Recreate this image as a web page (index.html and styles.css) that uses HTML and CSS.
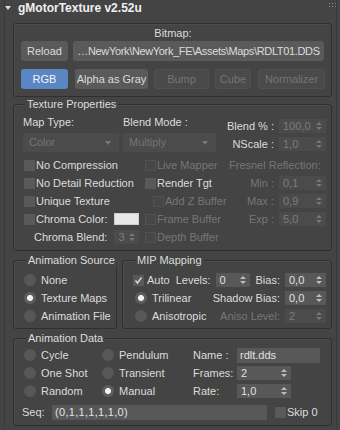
FILE: index.html
```html
<!DOCTYPE html>
<html lang="en">
<head>
    <meta charset="UTF-8">
    <title>gMotorTexture</title>
    <link rel="stylesheet" href="styles.css">
</head>
<body>
    <div class="rollout">
        <div class="title-bar">
            <span class="arrow"></span>
            <span class="title">gMotorTexture v2.52u</span>
            <svg class="grip" width="7" height="6" viewBox="0 0 7 6">
                <rect x="0" y="0" width="1" height="1"/><rect x="3" y="0" width="1" height="1"/><rect x="6" y="0" width="1" height="1"/>
                <rect x="0" y="3" width="1" height="1"/><rect x="3" y="3" width="1" height="1"/><rect x="6" y="3" width="1" height="1"/>
            </svg>
        </div>

        <!-- Bitmap -->
        <div class="group g-bitmap">
            <div class="center-label">Bitmap:</div>
            <div class="btn-row">
                <div class="btn w-reload">Reload</div>
                <div class="btn w-path">…NewYork\NewYork_FE\Assets\Maps\RDLT01.DDS</div>
            </div>
            <div class="btn-row row-2">
                <div class="btn active w-rgb">RGB</div>
                <div class="btn w-alpha">Alpha as Gray</div>
                <div class="btn off w-bump">Bump</div>
                <div class="btn off w-cube">Cube</div>
                <div class="btn off w-norm">Normalizer</div>
            </div>
        </div>

        <!-- Texture Properties -->
        <div class="group g-tex">
            <div class="legend">Texture Properties</div>
            <div class="tp-top">
                <div class="tp-maps">
                    <div class="tp-labels">
                        <span class="lbl-map">Map Type:</span>
                        <span>Blend Mode :</span>
                    </div>
                    <div class="tp-drops">
                        <div class="dd dd-color">Color</div>
                        <div class="dd dd-blend">Multiply</div>
                    </div>
                </div>
                <div class="tp-blend">
                    <div class="field-row"><span>Blend % :</span><span class="spin off w47">100,0</span></div>
                    <div class="field-row"><span>NScale :</span><span class="spin off w47">1,0</span></div>
                </div>
            </div>
            <div class="tp-grid">
                <div class="chk"><span class="box"></span>No Compression</div>
                <div class="chk off"><span class="box"></span>Live Mapper</div>
                <div class="fresnel off-text">Fresnel Reflection:</div>

                <div class="chk"><span class="box"></span>No Detail Reduction</div>
                <div class="chk"><span class="box"></span>Render Tgt</div>
                <div class="field-row"><span class="off-text">Min :</span><span class="spin off w47">0,1</span></div>

                <div class="chk"><span class="box"></span>Unique Texture</div>
                <div class="chk off indent"><span class="box"></span>Add Z Buffer</div>
                <div class="field-row"><span class="off-text">Max :</span><span class="spin off w47">0,9</span></div>

                <div class="chk"><span class="box"></span>Chroma Color:<span class="swatch"></span></div>
                <div class="chk off"><span class="box"></span>Frame Buffer</div>
                <div class="field-row"><span class="off-text">Exp :</span><span class="spin off w47">5,0</span></div>

                <div class="chroma-blend">Chroma Blend:<span class="spin off w25">3</span></div>
                <div class="chk off"><span class="box"></span>Depth Buffer</div>
                <div></div>
            </div>
        </div>

        <div class="pair">
            <!-- Animation Source -->
            <div class="group g-src">
                <div class="legend">Animation Source</div>
                <div class="opt"><span class="radio"></span>None</div>
                <div class="opt"><span class="radio on"></span>Texture Maps</div>
                <div class="opt"><span class="radio"></span>Animation File</div>
            </div>

            <!-- MIP Mapping -->
            <div class="group g-mip">
                <div class="legend">MIP Mapping</div>
                <div class="opt">
                    <span class="box checked">
                        <svg width="9" height="9" viewBox="0 0 9 9"><polyline points="1.5,4.5 3.5,7 7.5,1.5" fill="none" stroke="#d8d8d8" stroke-width="1.4"/></svg>
                    </span>Auto
                    <span class="mip-right">
                        <span>Levels:</span><span class="spin w34">0</span>
                        <span class="gap-l">Bias:</span><span class="spin w41">0,0</span>
                    </span>
                </div>
                <div class="opt"><span class="radio on"></span>Trilinear
                    <span class="mip-right"><span>Shadow Bias:</span><span class="spin w41">0,0</span></span>
                </div>
                <div class="opt"><span class="radio"></span>Anisotropic
                    <span class="mip-right"><span class="off-text">Aniso Level:</span><span class="spin off w41">2</span></span>
                </div>
            </div>
        </div>

        <!-- Animation Data -->
        <div class="group g-data">
            <div class="legend">Animation Data</div>
            <div class="ad-grid">
                <div class="opt"><span class="radio"></span>Cycle</div>
                <div class="opt"><span class="radio"></span>Pendulum</div>
                <div class="ad-field"><span class="ad-label">Name :</span><span class="text-field w83">rdlt.dds</span></div>

                <div class="opt"><span class="radio"></span>One Shot</div>
                <div class="opt"><span class="radio"></span>Transient</div>
                <div class="ad-field"><span class="ad-label">Frames:</span><span class="spin w54">2</span></div>

                <div class="opt"><span class="radio"></span>Random</div>
                <div class="opt"><span class="radio on"></span>Manual</div>
                <div class="ad-field"><span class="ad-label">Rate:</span><span class="spin w54">1,0</span></div>
            </div>
            <div class="seq-row">
                <span class="seq-label">Seq:</span>
                <span class="text-field seq-field">(0,1,1,1,1,1,0)</span>
                <span class="chk skip"><span class="box"></span>Skip 0</span>
            </div>
        </div>
    </div>
</body>
</html>
```

FILE: styles.css
```css
* {
    box-sizing: border-box;
}

body {
    margin: 0;
    background-color: #444444;
    font-family: "Liberation Sans", Arial, sans-serif;
    font-size: 11px;
    line-height: 14px;
    color: #dcdcdc;
}

.rollout {
    margin-left: 4px;
    width: 333px;
    height: 430px;
    border-left: 1px solid #3a3a3a;
    border-right: 1px solid #3a3a3a;
}

/* Title bar */
.title-bar {
    height: 16px;
    display: flex;
    align-items: center;
}

.arrow {
    width: 0;
    height: 0;
    border-left: 3px solid transparent;
    border-right: 3px solid transparent;
    border-top: 4px solid #e0e0e0;
}

.title {
    margin-left: 7px;
    font-weight: bold;
    font-size: 12px;
    color: #f0f0f0;
}

.grip {
    margin-left: auto;
    margin-top: -4px;
    fill: #8a8a8a;
}

/* Group boxes */
.group {
    margin-left: 8px;
    width: 319px;
    border: 1px solid #2f2f2f;
    border-radius: 3px;
    box-shadow: inset 1px 1px 0 #4c4c4c;
}

.legend {
    width: max-content;
    margin: -8px 0 0 2px;
    padding: 0 2px;
    background-color: #444444;
    line-height: 14px;
}

/* Bitmap group */
.g-bitmap {
    margin-top: 7px;
    padding: 0 6px 7px 7px;
}

.center-label {
    margin-top: 2px;
    text-align: center;
}

.btn-row {
    display: flex;
    margin-top: 1px;
}

.row-2 {
    margin-top: 8px;
}

.btn {
    height: 20px;
    line-height: 20px;
    text-align: center;
    background-color: #5a5a5a;
    border-radius: 3px;
    color: #dcdcdc;
    white-space: nowrap;
    overflow: hidden;
}

.btn.active {
    background-color: #5b86c4;
    color: #f4f4f4;
}

.btn.off {
    background-color: #4a4a4a;
    border: 1px solid #515151;
    line-height: 18px;
    color: #757575;
}

.w-reload { width: 47px; }
.w-path { width: 251px; margin-left: 5px; letter-spacing: -0.35px; }
.w-rgb { width: 47px; }
.w-alpha { width: 73px; margin-left: 7px; }
.w-bump { width: 55px; margin-left: 6px; }
.w-cube { width: 36px; margin-left: 6px; }
.w-norm { width: 67px; margin-left: 7px; }

/* Texture properties */
.g-tex {
    margin-top: 7px;
    padding: 0 4px 4px 9px;
}

.tp-top {
    display: flex;
    height: 42px;
}

.tp-maps {
    width: 204px;
}

.tp-labels {
    display: flex;
    margin-top: 4px;
}

.lbl-map {
    width: 100px;
}

.tp-drops {
    display: flex;
    margin-top: 4px;
}

.dd {
    position: relative;
    height: 19px;
    line-height: 19px;
    padding-left: 6px;
    background-color: #4b4b4b;
    color: #747474;
}

.dd::after {
    content: "";
    position: absolute;
    right: 8px;
    top: 8px;
    border-left: 3px solid transparent;
    border-right: 3px solid transparent;
    border-top: 4px solid #777777;
}

.dd-color { width: 96px; }
.dd-blend { width: 93px; margin-left: 4px; }

.tp-blend {
    width: 99px;
    padding-top: 6px;
}

.field-row {
    height: 18px;
    display: flex;
    align-items: center;
    justify-content: flex-end;
    white-space: nowrap;
}

.tp-grid {
    margin-top: 3px;
    display: grid;
    grid-template-columns: 122px 82px 99px;
    grid-auto-rows: 18px;
    align-items: center;
}

.fresnel {
    padding-left: 2px;
    white-space: nowrap;
}

.off-text {
    color: #767676;
}

/* Checkboxes */
.chk {
    display: flex;
    align-items: center;
    white-space: nowrap;
}

.box {
    width: 11px;
    height: 11px;
    margin-right: 1px;
    background-color: #595959;
    flex: none;
}

.tp-grid > .chk:nth-child(3n+1) .box {
    margin-left: 1px;
}

.chk.off {
    color: #767676;
}

.chk.off .box {
    background-color: #474747;
    border: 1px solid #525252;
}

.indent {
    padding-left: 8px;
}

.box.checked {
    display: flex;
    align-items: center;
    justify-content: center;
    margin-right: 3px;
}

.swatch {
    width: 25px;
    height: 12px;
    margin-left: 6px;
    background-color: #e8e8e8;
    border: 1px solid #cfcfcf;
    flex: none;
}

.chroma-blend {
    display: flex;
    align-items: center;
    padding-left: 11px;
    white-space: nowrap;
}

/* Spinners */
.spin {
    position: relative;
    height: 14px;
    line-height: 14px;
    margin-left: 5px;
    padding-left: 4px;
    background-color: #585858;
    color: #e2e2e2;
    flex: none;
}

.spin::before,
.spin::after {
    content: "";
    position: absolute;
    right: 4px;
    border-left: 3px solid transparent;
    border-right: 3px solid transparent;
}

.spin::before {
    top: 3px;
    border-bottom: 3px solid #bdbdbd;
}

.spin::after {
    bottom: 3px;
    border-top: 3px solid #bdbdbd;
}

.spin.off {
    background-color: #4b4b4b;
    color: #7c7c7c;
}

.spin.off::before { border-bottom-color: #777777; }
.spin.off::after { border-top-color: #777777; }

.w25 { width: 25px; margin-left: 7px; }
.w34 { width: 34px; }
.w41 { width: 41px; }
.w47 { width: 47px; }
.w54 { width: 54px; }

/* Animation source + MIP */
.pair {
    display: flex;
    margin-top: 9px;
}

.pair .group {
    height: 69px;
}

.g-src {
    width: 104px;
    padding: 0 0 3px 10px;
}

.g-mip {
    width: 210px;
    margin-left: 5px;
    padding: 0 5px 3px 10px;
}

.g-src .legend,
.g-mip .legend {
    margin-bottom: 4px;
}

.opt {
    height: 18px;
    display: flex;
    align-items: center;
    white-space: nowrap;
}

.radio {
    width: 12px;
    height: 12px;
    margin-right: 5px;
    border-radius: 50%;
    background-color: #575757;
    flex: none;
}

.radio.on {
    background: radial-gradient(circle, #f2f2f2 0, #f2f2f2 2.6px, #5e5e5e 3.4px);
}

.g-mip .radio {
    margin-left: 2px;
    margin-right: 5px;
}

.mip-right {
    margin-left: auto;
    display: flex;
    align-items: center;
}

.gap-l {
    margin-left: 6px;
}

/* Animation data */
.g-data {
    margin-top: 9px;
    padding: 0 5px 4px 10px;
}

.g-data .legend {
    margin-bottom: 1px;
}

.ad-grid {
    display: grid;
    grid-template-columns: 78px 91px 1fr;
    grid-auto-rows: 18px;
    align-items: center;
}

.ad-field {
    display: flex;
    align-items: center;
}

.ad-label {
    width: 44px;
}

.ad-field .spin {
    margin-left: 0;
}

.text-field {
    height: 15px;
    line-height: 15px;
    padding-left: 3px;
    background-color: #585858;
    color: #e2e2e2;
}

.w83 {
    width: 83px;
}

.seq-row {
    margin-top: 3px;
    height: 18px;
    display: flex;
    align-items: center;
}

.seq-label {
    width: 30px;
    margin-left: -2px;
}

.seq-field {
    width: 215px;
    letter-spacing: 0.3px;
}

.skip {
    margin-left: 8px;
}
```
